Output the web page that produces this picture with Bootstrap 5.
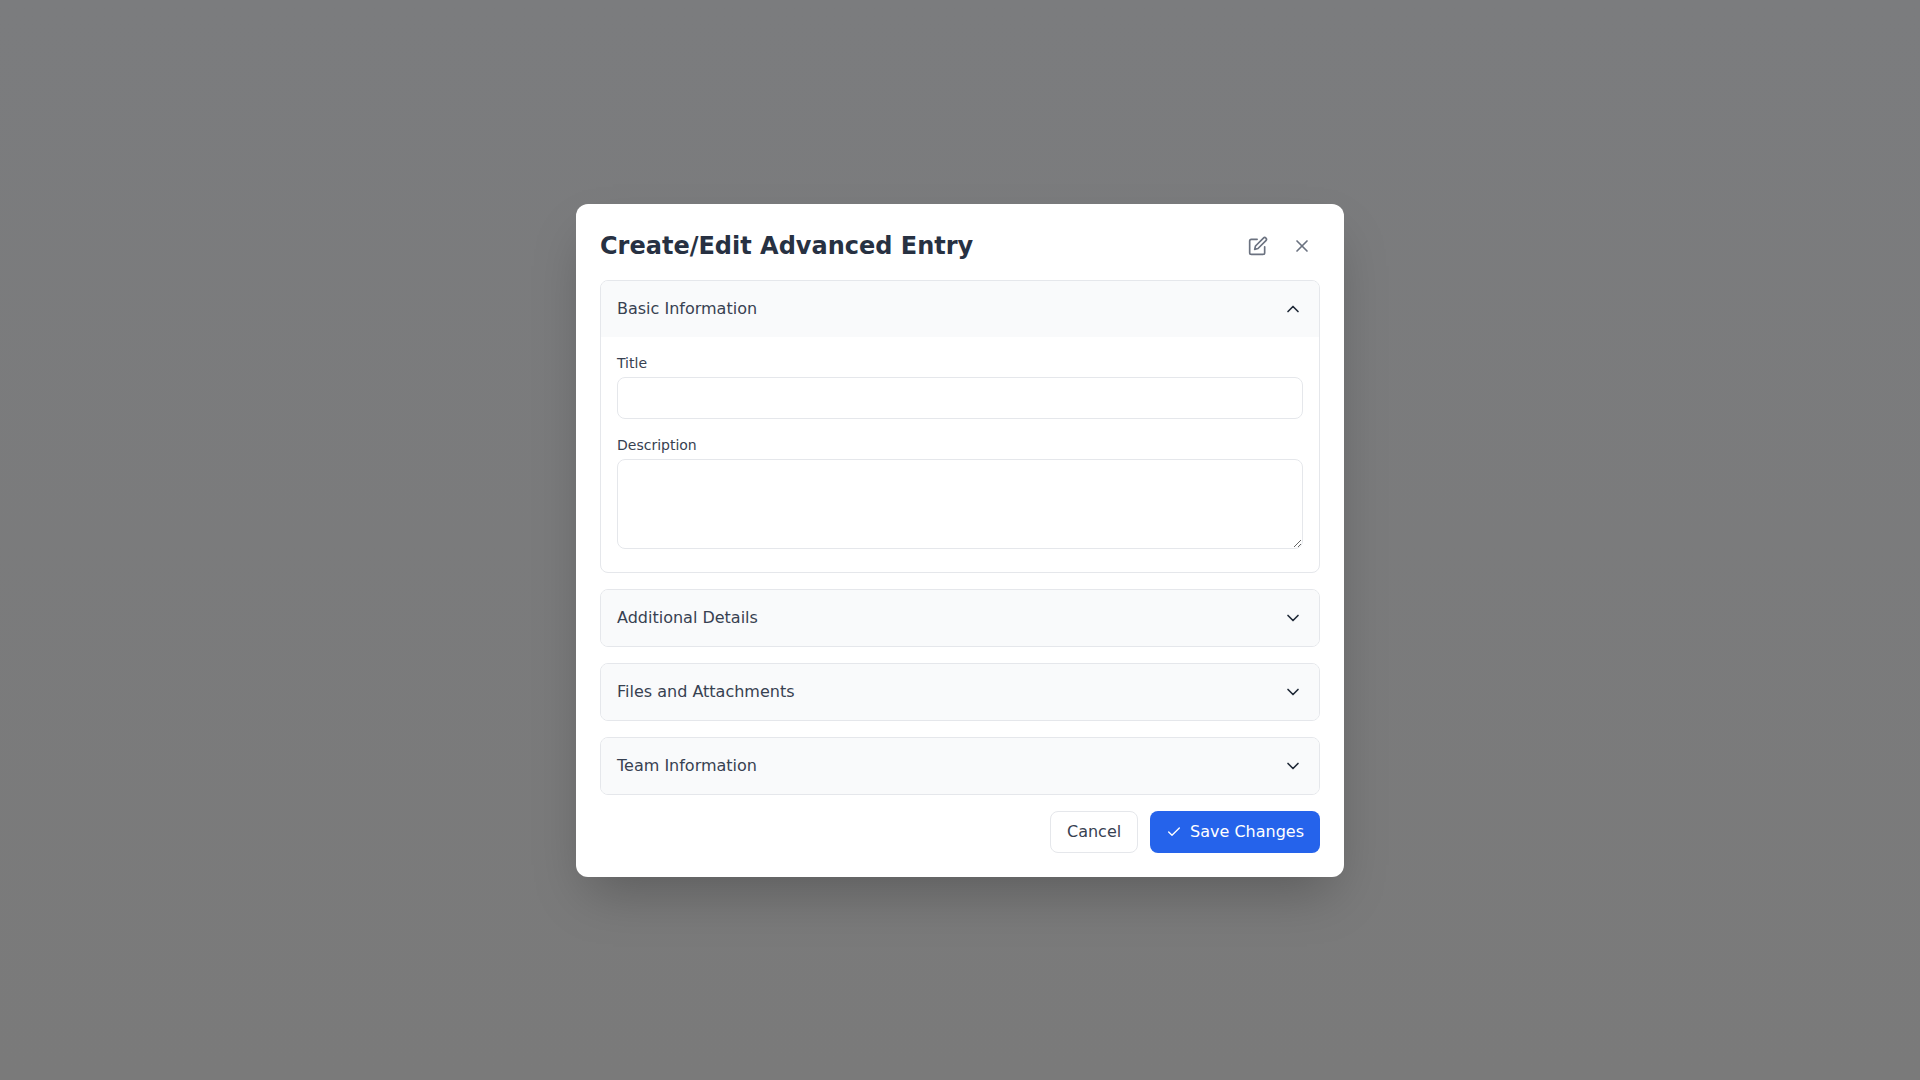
<!DOCTYPE html>
<html lang="en">
<head>
    <meta charset="UTF-8">
    <meta name="viewport" content="width=device-width, initial-scale=1.0">
    <title>Create/Edit Advanced Entry</title>
    <link href="https://cdn.jsdelivr.net/npm/bootstrap@5.3.0/dist/css/bootstrap.min.css" rel="stylesheet">
    <style>
        body {
            background: linear-gradient(180deg, #7b7c7e, #7a7a7a);
            min-height: 100vh;
            font-family: "DejaVu Sans", sans-serif;
            color: #374151;
        }
        .entry-dialog {
            width: 768px;
            background: #fff;
            border-radius: 12px;
            padding: 24px;
            box-shadow: 0 25px 50px -12px rgba(0, 0, 0, .25);
        }
        .entry-title {
            font-size: 24px;
            line-height: 32px;
            font-weight: 700;
            color: #273142;
        }
        .icon-btn {
            width: 36px;
            height: 36px;
            padding: 8px;
            border: 0;
            background: none;
            color: #6b7280;
            display: flex;
        }
        .section-box {
            border: 1px solid #e5e7eb;
            border-radius: 8px;
            overflow: hidden;
        }
        .section-head {
            width: 100%;
            height: 56px;
            padding: 0 16px;
            border: 0;
            background: #f9fafb;
            color: #374151;
            font-size: 16px;
        }
        .section-head svg { color: #1f2937; }
        .section-body { padding: 16px 16px 23px; }
        .field-label {
            display: block;
            font-size: 14px;
            line-height: 20px;
            margin-bottom: 4px;
            color: #374151;
        }
        .field-input {
            border: 1px solid #e5e7eb;
            border-radius: 8px;
            height: 42px;
            box-shadow: none;
        }
        textarea.field-input { height: 90px; display: block; }
        .btn-cancel, .btn-save {
            height: 42px;
            padding: 0 16px;
            font-size: 16px;
            border-radius: 8px;
        }
        .btn-cancel {
            width: 88px;
            background: #fff;
            border: 1px solid #e5e7eb;
            color: #374151;
        }
        .btn-save {
            width: 170px;
            background: #2563eb;
            border: 0;
            color: #fff;
        }
        .foot-gap { gap: 12px; }
    </style>
</head>
<body class="d-flex align-items-center justify-content-center">

<div class="entry-dialog">
    <div class="d-flex justify-content-between align-items-center mb-3">
        <h2 class="entry-title m-0">Create/Edit Advanced Entry</h2>
        <div class="d-flex gap-2">
            <button class="icon-btn" type="button" aria-label="Edit">
                <svg width="20" height="20" viewBox="0 0 24 24" fill="none" stroke="currentColor" stroke-width="2" stroke-linecap="round" stroke-linejoin="round"><path d="M11 4H4a2 2 0 0 0-2 2v14a2 2 0 0 0 2 2h14a2 2 0 0 0 2-2v-7"/><path d="M18.5 2.5a2.12 2.12 0 0 1 3 3L12 15l-4 1 1-4z"/></svg>
            </button>
            <button class="icon-btn" type="button" aria-label="Close">
                <svg width="20" height="20" viewBox="0 0 24 24" fill="none" stroke="currentColor" stroke-width="2" stroke-linecap="round" stroke-linejoin="round"><path d="M18 6 6 18"/><path d="m6 6 12 12"/></svg>
            </button>
        </div>
    </div>

    <div class="d-flex flex-column gap-3">
        <div class="section-box">
            <button class="section-head d-flex justify-content-between align-items-center" type="button">
                <span>Basic Information</span>
                <svg width="20" height="20" viewBox="0 0 24 24" fill="none" stroke="currentColor" stroke-width="2" stroke-linecap="round" stroke-linejoin="round"><path d="m18 15-6-6-6 6"/></svg>
            </button>
            <div class="section-body">
                <div class="mb-3">
                    <label class="field-label" for="entry-title">Title</label>
                    <input id="entry-title" type="text" class="form-control field-input">
                </div>
                <div>
                    <label class="field-label" for="entry-description">Description</label>
                    <textarea id="entry-description" class="form-control field-input"></textarea>
                </div>
            </div>
        </div>

        <div class="section-box">
            <button class="section-head d-flex justify-content-between align-items-center" type="button">
                <span>Additional Details</span>
                <svg width="20" height="20" viewBox="0 0 24 24" fill="none" stroke="currentColor" stroke-width="2" stroke-linecap="round" stroke-linejoin="round"><path d="m6 9 6 6 6-6"/></svg>
            </button>
        </div>
        <div class="section-box">
            <button class="section-head d-flex justify-content-between align-items-center" type="button">
                <span>Files and Attachments</span>
                <svg width="20" height="20" viewBox="0 0 24 24" fill="none" stroke="currentColor" stroke-width="2" stroke-linecap="round" stroke-linejoin="round"><path d="m6 9 6 6 6-6"/></svg>
            </button>
        </div>
        <div class="section-box">
            <button class="section-head d-flex justify-content-between align-items-center" type="button">
                <span>Team Information</span>
                <svg width="20" height="20" viewBox="0 0 24 24" fill="none" stroke="currentColor" stroke-width="2" stroke-linecap="round" stroke-linejoin="round"><path d="m6 9 6 6 6-6"/></svg>
            </button>
        </div>

        <div class="d-flex justify-content-end foot-gap">
            <button class="btn btn-cancel" type="button">Cancel</button>
            <button class="btn btn-save d-flex align-items-center justify-content-center gap-2" type="button">
                <svg width="16" height="16" viewBox="0 0 24 24" fill="none" stroke="currentColor" stroke-width="2" stroke-linecap="round" stroke-linejoin="round"><path d="M20 6 9 17l-5-5"/></svg>
                <span>Save Changes</span>
            </button>
        </div>
    </div>
</div>

<script src="https://cdn.jsdelivr.net/npm/bootstrap@5.3.0/dist/js/bootstrap.bundle.min.js"></script>
</body>
</html>
